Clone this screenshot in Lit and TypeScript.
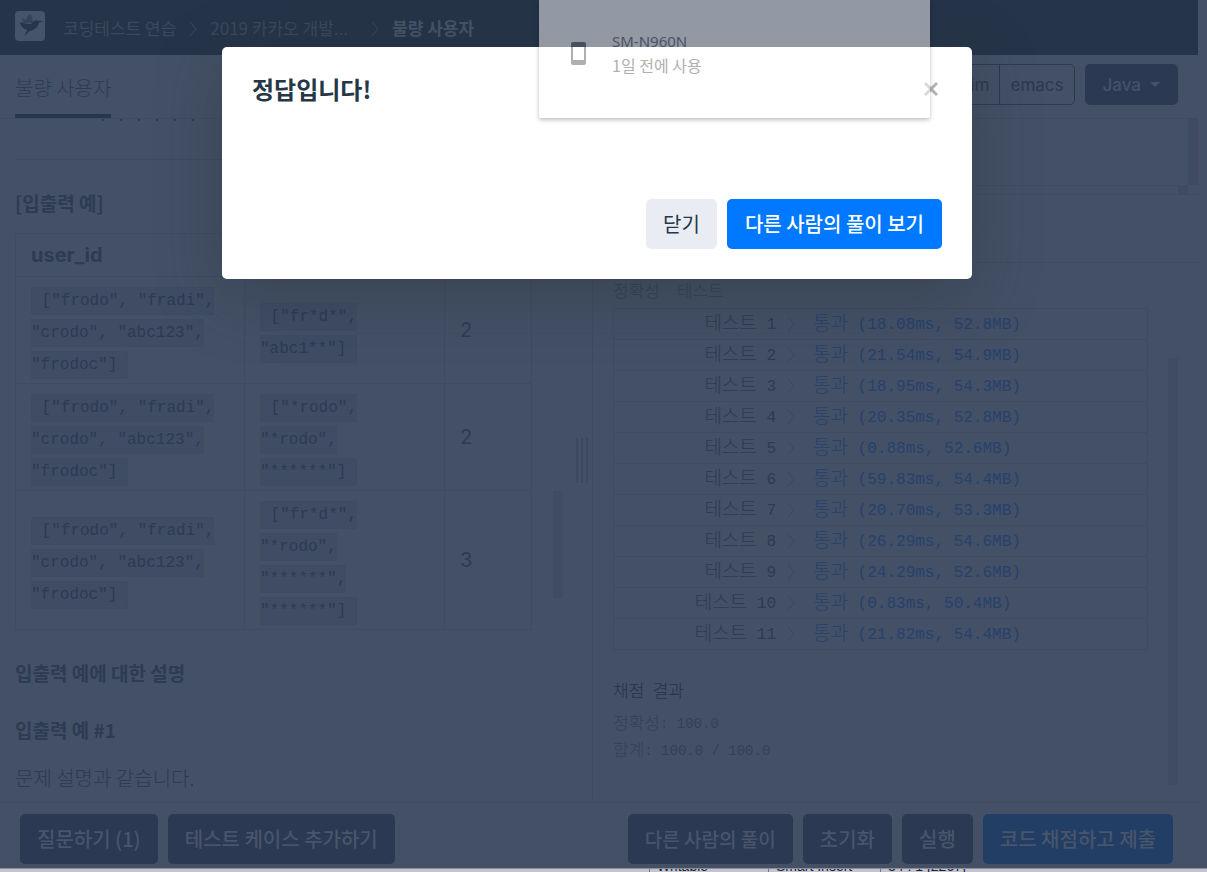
import { LitElement, html, css, svg } from "lit";
import { customElement } from "lit/decorators.js";

const examples = [
  { user: '["frodo", "fradi", "crodo", "abc123", "frodoc"]', banned: '["fr*d*", "abc1**"]', result: 2 },
  { user: '["frodo", "fradi", "crodo", "abc123", "frodoc"]', banned: '["*rodo", "*rodo", "******"]', result: 2 },
  { user: '["frodo", "fradi", "crodo", "abc123", "frodoc"]', banned: '["fr*d*", "*rodo", "******", "******"]', result: 3 },
];

const results = [
  "18.08ms, 52.8MB",
  "21.54ms, 54.9MB",
  "18.95ms, 54.3MB",
  "20.35ms, 52.8MB",
  "0.88ms, 52.6MB",
  "59.83ms, 54.4MB",
  "20.70ms, 53.3MB",
  "26.29ms, 54.6MB",
  "24.29ms, 52.6MB",
  "0.83ms, 50.4MB",
  "21.82ms, 54.4MB",
];

const chevron = html`<svg class="chevron" width="8" height="16" viewBox="0 0 8 16" aria-hidden="true">
  <path d="M1 1 L7 8 L1 15" fill="none" stroke="currentColor" stroke-width="1" />
</svg>`;

const bird = svg`
  <path d="M8 12 L7 7 L11 9 L13 4 L16 3 L17 7 L18 12 Z" fill="#36445a" />
  <path d="M5 11 C9 12 13 14 17 12.5 C18 9.5 21 8.5 24 9.8 L29 10.3 L24 11.4 C23 16 20 18.5 15 20 L9 25 L12.5 19 C8 18 5.5 15 5 11 Z" fill="#28364c" />`;

@customElement("app-root")
export class AppRoot extends LitElement {
  static styles = css`
    :host {
      display: block;
      position: relative;
      height: 100vh;
      overflow: hidden;
      background: #445066;
      color: #2d3b53;
      font-family: "Noto Sans CJK KR", sans-serif;
      font-size: 20px;
      line-height: 28px;
    }
    * { box-sizing: border-box; }
    button { font: inherit; cursor: pointer; }
    .page {
      display: grid;
      grid-template-rows: 55px 64px minmax(0, 1fr) 66px 4px;
      height: 100%;
    }
    .page > * { margin-right: 9px; }
    .top {
      display: flex;
      align-items: center;
      padding: 0 15px;
      background: #263449;
      color: #3b485d;
      font-size: 17px;
    }
    .top a { color: inherit; text-decoration: none; }
    .top .logo { display: flex; margin: 0 18px 4px 0; }
    .top .group { padding-right: 10px; }
    .top .chevron { margin: 2px 13px 0; }
    .current { color: #465368; font-weight: 700; }
    .nav {
      display: flex;
      justify-content: space-between;
      padding: 0 20px 0 15px;
      border-bottom: 1px solid #3f4b62;
    }
    .tab {
      padding-top: 19px;
      border-bottom: 4px solid #27354f;
      color: #2e3c53;
      font-weight: 300;
    }
    .tools { display: flex; gap: 10px; padding-top: 9px; font-family: Inter, sans-serif; font-size: 17px; }
    .modes { display: flex; height: 41px; border: 1px solid #2b3953; border-radius: 5px; }
    .modes button {
      padding: 0 10px;
      border: 0;
      background: none;
      color: #2b3953;
    }
    .modes button + button { border-left: 1px solid #2b3953; }
    .language {
      display: flex;
      align-items: center;
      gap: 9px;
      height: 41px;
      padding: 0 18px;
      border: 0;
      border-radius: 5px;
      background: #2c3953;
      color: #455268;
      font-weight: 500;
    }
    .work { display: grid; grid-template-columns: 99fr 101fr; min-height: 0; }
    .problem {
      display: grid;
      grid-template-columns: minmax(0, 1fr) 10px 29px;
      min-height: 0;
      overflow: hidden;
      border-right: 1px solid #3f4b61;
    }
    .text { min-height: 0; overflow: hidden; padding: 0 21px 0 15px; }
    .marks { display: flex; gap: 16px; height: 41px; padding-left: 87px; border-bottom: 1px solid #3e4a60; }
    .marks i { width: 2px; height: 2px; background: #2f3d54; }
    h2, h3 { margin: 29px 0 16px; font-size: 19px; line-height: 28px; font-weight: 700; }
    p { margin: 20px 0 0; font-weight: 300; }
    h3 { margin-bottom: 20px; }
    .samples {
      width: 100%;
      border-collapse: collapse;
      table-layout: fixed;
      font-family: Inter, sans-serif;
    }
    .samples th, .samples td {
      padding: 5px 15px;
      border: 1px solid #3f4b61;
      text-align: left;
      vertical-align: middle;
      line-height: 32px;
    }
    .samples .c1 { width: 229px; }
    .samples .c2 { width: 200px; }
    .samples .list { padding: 8px 15px 2px; font: 16px/32px "Liberation Mono", monospace; }
    code {
      padding: 4px 0;
      border: 1px solid #3e4b63;
      border-radius: 4px;
      background: #3f4c64;
      font: inherit;
    }
    .track { display: grid; }
    .track i { grid-row: 2; background: #404c63; }
    .track.left { grid-template-rows: 371fr 107fr 204fr; }
    .track.right { grid-template-rows: 95fr 427fr 17fr; }
    .grip { display: flex; align-items: center; justify-content: center; gap: 3px; padding-left: 8px; }
    .grip i { width: 2px; height: 45px; background: #3b4860; }
    .output { display: grid; grid-template-rows: 76px 68px minmax(0, 1fr); min-height: 0; }
    .editor {
      display: grid;
      grid-template: 66px 10px / 1fr 10px 10px;
      border-bottom: 1px solid #3f4b61;
    }
    .editor .bar { grid-area: 1 / 3; background: #404b62; }
    .editor .line { grid-area: 2 / 1 / 3 / 3; border-top: 1px solid #3f4b61; }
    .editor .corner { grid-area: 2 / 2; background: #3f4b61; }
    .caption { border-bottom: 1px solid #3f4b61; }
    .console {
      display: grid;
      grid-template-columns: minmax(0, 1fr) 10px;
      gap: 20px;
      min-height: 0;
      overflow: hidden;
      padding: 0 20px;
      font-family: "Liberation Mono", "Noto Sans CJK KR", monospace;
      font-size: 14px;
      line-height: 27px;
      color: #334158;
    }
    .log { padding-top: 16px; min-height: 0; overflow: hidden; }
    .ko {
      font-family: "Noto Sans CJK KR", sans-serif;
      font-size: 17px;
      line-height: 20px;
      font-weight: 300;
      vertical-align: -1px;
    }
    .log div { white-space: pre; }
    .log .done { margin: 29px 0 5px; color: #25334a; }
    .log .first { margin-bottom: 2px; }
    .tests {
      width: 100%;
      border-collapse: collapse;
      font-size: 16px;
      line-height: 28px;
    }
    .tests tr { height: 31px; border: 1px solid #3f4b61; }
    .tests th {
      width: 34%;
      padding: 2px 0 0;
      text-align: right;
      font-weight: 400;
      color: #2e3b51;
      white-space: nowrap;
    }
    .tests td { padding: 2px 0 0 18px; color: #26426d; }
    .tests .ko { font-size: 19px; }
    .tests .chevron { margin: 0 0 0 11px; vertical-align: -3px; color: #39475d; }
    .bottom {
      display: flex;
      justify-content: space-between;
      align-items: flex-start;
      padding: 11px 25px 0 20px;
      border-top: 1px solid #3f4b61;
    }
    .bottom div { display: flex; gap: 10px; }
    .bottom button {
      height: 50px;
      padding: 0 17px;
      border: 0;
      border-radius: 5px;
      background: #2c3953;
      color: #48556b;
      font-weight: 500;
    }
    .bottom .short { font-size: 19px; }
    .bottom .submit { background: #233e65; }
    .page > .status {
      display: flex;
      align-items: flex-end;
      margin: 0;
      padding-left: 649px;
      overflow: hidden;
      border-top: 1px solid #8d8f98;
      background: #c4c4cf;
      color: #20242c;
      font: 14px/12px "Liberation Sans", sans-serif;
      white-space: pre;
    }
    .status span { padding: 0 7px; border-left: 1px solid #777b85; }
    .status .a { width: 119px; }
    .status .b { width: 112px; }
    .overlay {
      position: absolute;
      inset: 0 13px 0 0;
      display: flex;
      justify-content: center;
      align-items: flex-start;
      padding: 47px 20px 0;
    }
    .modal {
      width: 750px;
      padding: 24px 30px 30px;
      border-radius: 5px;
      background: #fff;
      color: #263747;
      box-shadow: 0 16px 64px rgba(36, 46, 52, 0.36);
    }
    .modal header { display: flex; justify-content: space-between; align-items: center; height: 36px; }
    .modal h1 { margin: 0; font-size: 24px; line-height: 36px; font-weight: 700; }
    .close { display: flex; padding: 3px; border: 0; background: none; color: #b3b3b3; }
    .modal footer { display: flex; justify-content: flex-end; gap: 10px; margin-top: 92px; }
    .modal footer button {
      height: 50px;
      padding: 0 17px;
      border: 0;
      border-radius: 5px;
      background: #e9ecf3;
      color: #263747;
      font-weight: 400;
    }
    .modal footer .primary { padding: 0 18px; background: #0078ff; color: #fff; font-weight: 500; }
    .device {
      position: absolute;
      top: 0;
      left: 539px;
      display: flex;
      gap: 26px;
      width: 391px;
      height: 118px;
      padding: 29px 32px;
      border-radius: 0 0 2px 2px;
      background: rgba(255, 255, 255, 0.5);
      box-shadow: 0 2px 4px rgba(0, 0, 0, 0.25);
      font-size: 16px;
      line-height: 24px;
      color: #b0b0b0;
    }
    .device svg { margin-top: 13px; }
    .device b { display: block; color: #4a5363; font-family: "Noto Sans", sans-serif; font-size: 15px; font-weight: 400; }
  `;

  render() {
    return html`
      <div class="page">
        <nav class="top">
          <a class="logo" href="#" aria-label="홈">
            <svg width="30" height="30" viewBox="0 0 30 30"><rect width="30" height="30" rx="4" fill="#465369" />${bird}</svg>
          </a>
          <a href="#">코딩테스트 연습</a>${chevron}
          <a class="group" href="#">2019 카카오 개발...</a>${chevron}
          <span class="current">불량 사용자</span>
        </nav>
        <div class="nav">
          <div class="tab">불량 사용자</div>
          <div class="tools">
            <div class="modes"><button>vim</button><button>emacs</button></div>
            <button class="language">Java
              <svg width="10" height="6" viewBox="0 0 10 6" aria-hidden="true"><path d="M0 0H10L5 5Z" fill="currentColor" /></svg>
            </button>
          </div>
        </div>
        <main class="work">
          <section class="problem">
            <div class="text">
              <div class="marks">${[0, 1, 2, 3, 4, 5].map(() => html`<i></i>`)}</div>
              <h2>[입출력 예]</h2>
              <table class="samples">
                <thead>
                  <tr><th class="c1">user_id</th><th class="c2"></th><th></th></tr>
                </thead>
                <tbody>
                  ${examples.map((e) => html`<tr>
                    <td class="list"><code>&nbsp;${e.user}&nbsp;</code></td>
                    <td class="list"><code>&nbsp;${e.banned}&nbsp;</code></td>
                    <td>${e.result}</td>
                  </tr>`)}
                </tbody>
              </table>
              <h2>입출력 예에 대한 설명</h2>
              <h3>입출력 예 #1</h3>
              <p>문제 설명과 같습니다.</p>
            </div>
            <div class="track left"><i></i></div>
            <div class="grip"><i></i><i></i><i></i></div>
          </section>
          <section class="output">
            <div class="editor"><i class="bar"></i><i class="line"></i><i class="corner"></i></div>
            <div class="caption"></div>
            <div class="console">
              <div class="log">
                <div class="first"><span class="ko">정확성</span>  <span class="ko">테스트</span></div>
                <table class="tests">
                  <tbody>
                    ${results.map((r, i) => html`<tr>
                      <th scope="row"><span class="ko">테스트</span> ${i + 1}${chevron}</th>
                      <td><span class="ko">통과</span> (${r})</td>
                    </tr>`)}
                  </tbody>
                </table>
                <div class="done"><span class="ko">채점</span> <span class="ko">결과</span></div>
                <div><span class="ko">정확성</span>: 100.0</div>
                <div><span class="ko">합계</span>: 100.0 / 100.0</div>
              </div>
              <div class="track right"><i></i></div>
            </div>
          </section>
        </main>
        <div class="bottom">
          <div><button>질문하기 (1)</button><button>테스트 케이스 추가하기</button></div>
          <div>
            <button class="short">다른 사람의 풀이</button><button>초기화</button><button>실행</button
            ><button class="submit">코드 채점하고 제출</button>
          </div>
        </div>
        <div class="status"><span class="a">Writable</span><span class="b">Smart Insert</span><span>34 : 1 [2267]</span></div>
      </div>
      <div class="overlay">
        <div class="modal" role="dialog" aria-labelledby="title">
          <header>
            <h1 id="title">정답입니다!</h1>
            <button class="close" aria-label="닫기">
              <svg width="16" height="16" viewBox="0 0 16 16"><path d="M2 2L14 14M14 2L2 14" stroke="currentColor" stroke-width="3" /></svg>
            </button>
          </header>
          <footer><button>닫기</button><button class="primary">다른 사람의 풀이 보기</button></footer>
        </div>
      </div>
      <aside class="device">
        <svg width="15" height="23" viewBox="0 0 15 23" aria-hidden="true">
          <path d="M0 5V2Q0 0 2 0H13Q15 0 15 2V5Z" fill="#465060" />
          <path d="M0 5H2V18H13V5H15V21Q15 23 13 23H2Q0 23 0 21Z" fill="#adafb2" />
        </svg>
        <div><b>SM-N960N</b>1일 전에 사용</div>
      </aside>
    `;
  }
}
